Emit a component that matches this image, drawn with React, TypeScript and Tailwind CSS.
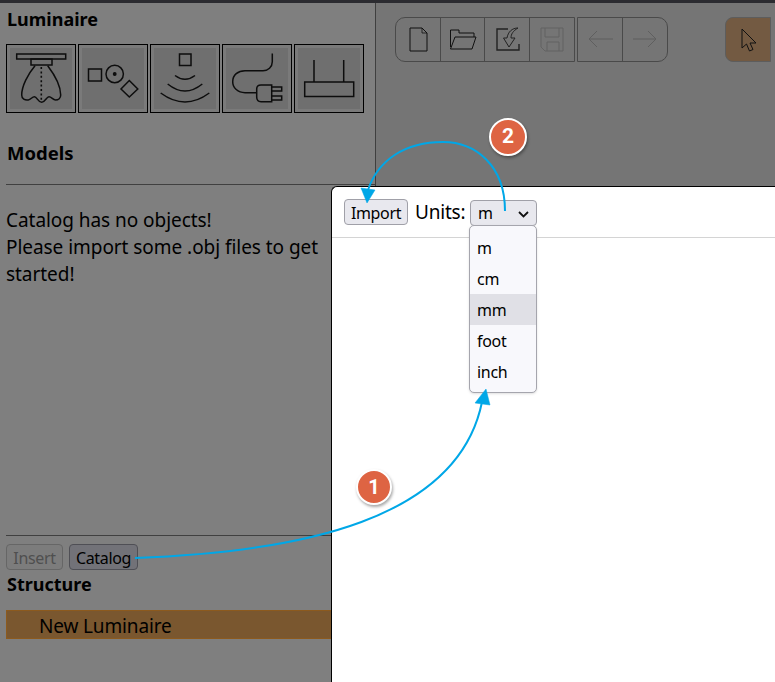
import React from 'react';

const font = { fontFamily: '"Noto Sans", "Open Sans", sans-serif' };

function LuminaireButton({ children }: { children: React.ReactNode }) {
  return (
    <div className="w-[70px] h-[69px] border border-black bg-[#7a7a7a] p-[3px] shrink-0">
      <div className="relative w-full h-full bg-[#6f6f6f]">
        {children}
      </div>
    </div>
  );
}

function IconSvg({ children }: { children: React.ReactNode }) {
  return (
    <svg viewBox="4 4 62 61" className="block w-[62px] h-[61px]" fill="none" stroke="#0d0d0d" strokeWidth="1.5">
      {children}
    </svg>
  );
}

function ToolSeg({ w, last, children }: { w: string; last?: boolean; children: React.ReactNode }) {
  return (
    <div className={`${w} h-full ${last ? '' : 'border-r border-[#4a4a4a]'}`}>
      {children}
    </div>
  );
}

function ToolSvg({ children, stroke = '#111' }: { children: React.ReactNode; stroke?: string }) {
  return (
    <svg width="44" height="43" viewBox="0 0 44 43" fill="none" stroke={stroke} strokeWidth="1" className="block">
      {children}
    </svg>
  );
}

export default function App() {
  return (
    <div className="relative w-[775px] h-[682px] overflow-hidden bg-[#7f7f7f] text-black" style={font}>
      <div className="h-[3px] bg-[#2b2b30]" />
      <div className="flex h-[679px]">
        {/* left panel */}
        <div className="w-[376px] shrink-0 border-r border-[#3f3f3f] flex flex-col">
          <div className="pl-[7px] h-[33px] flex items-center text-[18px] font-bold">Luminaire</div>
          <div className="flex gap-[2px] pl-[6px] mt-[8px]">
            <LuminaireButton>
              <IconSvg>
                <rect x="10.7" y="10" width="49" height="5" />
                <rect x="25" y="15" width="21" height="6" />
                <path d="M29 21.7C22 30 15.7 42 15.7 51C15.7 55 19 56.5 22.3 56C25 55.5 26 52.7 28.5 52.7C31 52.7 32 58.3 35.7 58.3C39 58.3 40.5 52.7 43 52.7C45.5 52.7 47 56 49.5 56C52.5 56 54.7 54 54.7 51C54.7 42 48 30 41.7 21.7" />
                <path d="M35.3 23V58" strokeDasharray="2 2.4" strokeWidth="1.6" />
              </IconSvg>
            </LuminaireButton>
            <LuminaireButton>
              <IconSvg>
                <rect x="10.5" y="25" width="13" height="12" />
                <circle cx="36.7" cy="30" r="8.7" />
                <circle cx="36.7" cy="30" r="1.2" fill="#0d0d0d" />
                <path d="M51.3 36.5L59.8 45L51.3 53L43 45Z" />
              </IconSvg>
            </LuminaireButton>
            <LuminaireButton>
              <IconSvg>
                <rect x="29.5" y="10" width="11.5" height="11.5" />
                <path d="M25 31.5Q35 39 45 31.5" />
                <path d="M17.7 40Q35 54 52.3 40" />
                <path d="M10.7 49Q35 67 59.3 49" />
              </IconSvg>
            </LuminaireButton>
            <LuminaireButton>
              <IconSvg>
                <path d="M50.3 9.5V17.7C50.3 23 46 26.7 41 26.7H23C16 26.7 10.7 31 10.7 37.7C10.7 44 16 48.7 23 48.7H34.7" />
                <path d="M49.7 41H39C36 41 34.7 43 34.7 45V53C34.7 56 36.5 57.7 39 57.7H49.7Z" />
                <path d="M49.7 43H59.7V47H49.7M49.7 52H59.7V56H49.7" />
              </IconSvg>
            </LuminaireButton>
            <LuminaireButton>
              <IconSvg>
                <rect x="10.7" y="38" width="49" height="14.5" />
                <path d="M20 16V38M49.7 16V38" />
              </IconSvg>
            </LuminaireButton>
          </div>
          <div className="pl-[7px] mt-[26px] h-[27px] flex items-center text-[18.5px] font-bold">Models</div>
          <div className="mt-[18px] ml-[6px] border-t border-[#404040]" />
          <div className="pl-[6px] pt-[22px] text-[19px] leading-[27px] w-[335px] tracking-[-0.05px]">
            Catalog has no objects!<br />Please import some .obj files to get<br />started!
          </div>
          <div className="mt-auto ml-[6px] border-t border-[#404040]" />
          <div className="flex gap-[6px] pl-[6px] mt-[8px]">
            <div className="h-[26px] w-[57px] pt-px rounded-[4px] border border-[#666] bg-[#7c7c7c] text-[#4f4f4f] text-[16px] flex items-center justify-center tracking-[-0.35px]">Insert</div>
            <div className="h-[26px] w-[69px] pt-px rounded-[4px] border border-[#4f4f55] bg-[#727278] text-[16px] flex items-center justify-center tracking-[-0.35px]">Catalog</div>
          </div>
          <div className="pl-[7px] h-[29px] flex items-center text-[18px] font-bold">Structure</div>
          <div className="mt-[11px] ml-[6px] h-[29px] pt-[3px] bg-[#7a572f] border border-[#8c5a1e] pl-[32px] flex items-center text-[19px] tracking-[-0.15px]">New Luminaire</div>
          <div className="h-[43px]" />
        </div>
        {/* toolbar */}
        <div className="flex-1 bg-[#757575] flex items-start pl-[19px] pt-[14px] gap-[2px]">
          <div className="flex h-[45px] w-[180px] rounded-l-[10px] border border-[#4a4a4a] shrink-0">
            <ToolSeg w="w-[45px]">
              <ToolSvg>
                <path d="M14 10H26L31 15V33H14Z" />
                <path d="M26 10V15H31" strokeWidth="0.8" />
              </ToolSvg>
            </ToolSeg>
            <ToolSeg w="w-[44px]">
              <ToolSvg>
                <path d="M9.5 29V12H18V15H33V19" />
                <path d="M9.5 31L14 19H35L31 31Z" />
              </ToolSvg>
            </ToolSeg>
            <ToolSeg w="w-[45px]">
              <ToolSvg stroke="#222">
                <path d="M23 11H12V32H34V26" strokeWidth="1.4" />
                <path d="M33 10C27 10 23 14 22 20H18.5L24 29L30 20H26C26 16 28 13 33 10Z" />
              </ToolSvg>
            </ToolSeg>
            <ToolSeg w="w-[44px]" last>
              <ToolSvg stroke="#636363">
                <path d="M11 10H33V33H15L11 29Z" />
                <path d="M15 10V19H29V10M17 33V24H29V33" />
              </ToolSvg>
            </ToolSeg>
          </div>
          <div className="flex h-[45px] w-[91px] rounded-r-[10px] border border-[#4a4a4a] shrink-0">
            <ToolSeg w="w-[45px]">
              <ToolSvg stroke="#5f5f5f">
                <path d="M35 21H11M19 13L11 21L19 29" />
              </ToolSvg>
            </ToolSeg>
            <ToolSeg w="w-[44px]" last>
              <ToolSvg stroke="#5f5f5f">
                <path d="M10 21H33M25 13L33 21L25 29" />
              </ToolSvg>
            </ToolSeg>
          </div>
          <div className="flex h-[45px] ml-[55px] rounded-l-[8px] bg-[#735a42] border border-[#5d5d5d] w-[46px] shrink-0">
            <ToolSvg stroke="#111">
              <path d="M16 11V30L20.5 26L23.5 33L27 31.5L24 25H30Z" />
            </ToolSvg>
          </div>
        </div>
      </div>

      {/* import dialog */}
      <div className="absolute left-[331px] top-[186px] w-[444px] h-[496px] bg-white border-l border-t border-black rounded-tl-[6px]">
        <div className="h-[51px] border-b border-[#d4d4d4] flex items-start pl-[12px] pt-[12px] text-[18px]">
          <div className="h-[26px] w-[64px] pt-px rounded-[4px] border border-[#a0a0a8] bg-[#e8e8ee] text-[16px] tracking-[-0.35px] flex items-center justify-center">Import</div>
          <div className="ml-[7px] w-[55px] h-[26px] pt-px flex items-center text-[19px] tracking-[-0.2px]">Units:</div>
          <div className="mt-[1px] h-[26px] w-[67px] rounded-[4px] border border-[#a0a0a8] bg-[#e8e8ee] text-[16px] flex items-center pl-[7px]">m</div>
        </div>
      </div>
      <svg className="absolute left-[518px] top-[211px]" width="11" height="7" viewBox="0 0 11 7" fill="none" stroke="#111" strokeWidth="1.8">
        <path d="M1 1L5.5 5.5L10 1" />
      </svg>
      {/* units menu */}
      <div className="absolute left-[469px] top-[225px] w-[68px] h-[168px] rounded-[5px] border border-[#a5a5ad] bg-[#f8f8fc] py-[6px] text-[16px] tracking-[-0.3px] shadow-sm">
        {['m', 'cm', 'mm', 'foot', 'inch'].map((u) => (
          <div key={u} className={`h-[31px] pl-[7px] flex items-center ${u === 'mm' ? 'bg-[#e0e0e6]' : ''}`}>{u}</div>
        ))}
      </div>

      {/* callout arrows */}
      <svg className="absolute left-0 top-0 pointer-events-none" width="775" height="682" viewBox="0 0 775 682" fill="none" stroke="#00a7e7" strokeWidth="2">
        <path d="M135 558C300 552 458 520 482 402" />
        <path d="M475 403L486 389L490 405Z" fill="#00a7e7" strokeWidth="0.5" />
        <path d="M505 211C505 165 475 142 443 142C405 142 378 160 368 190" />
        <path d="M361 188L375 190L367 203Z" fill="#00a7e7" strokeWidth="0.5" />
      </svg>
      <div className="absolute left-[356px] top-[469px] w-[36px] h-[36px] rounded-full bg-[#de6443] border-[2px] border-white shadow-[1px_2px_3px_rgba(0,0,0,0.35)] flex items-center justify-center text-white text-[20px] font-bold" style={{ fontFamily: 'Roboto, sans-serif' }}>1</div>
      <div className="absolute left-[489px] top-[118px] w-[38px] h-[38px] rounded-full bg-[#de6443] border-[2px] border-white shadow-[1px_2px_3px_rgba(0,0,0,0.35)] flex items-center justify-center text-white text-[21px] font-bold" style={{ fontFamily: 'Roboto, sans-serif' }}>2</div>
    </div>
  );
}
